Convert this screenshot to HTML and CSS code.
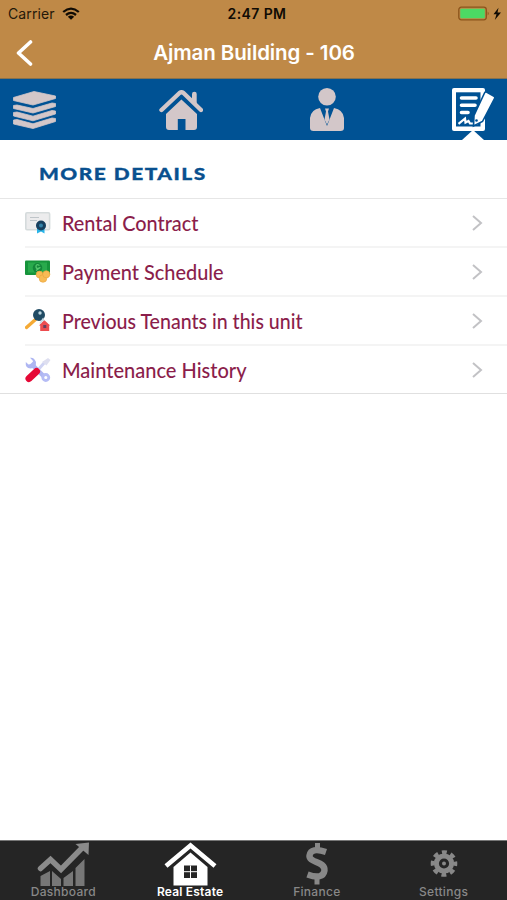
FILE: index.html
```html
<!DOCTYPE html>
<html lang="en">
<head>
<meta charset="utf-8">
<title>Ajman Building - 106</title>
<link rel="stylesheet" href="styles.css">
</head>
<body>
<div class="app">
  <header class="header">
    <div class="status">
      <div class="carrier"><span class="carrier-name">Carrier</span>
        <svg width="18" height="14" viewBox="0 0 18 14" fill="none" stroke="#100b04" stroke-width="2.3"><path d="M1.2 5Q9-1.7 16.8 5M4 8Q9 3.8 14 8"/><path d="M9 12.8 5.8 9.7Q9 7.2 12.2 9.7Z" fill="#100b04" stroke="none"/></svg>
      </div>
      <div class="clock"><span>2:47 PM</span></div>
      <div class="battery">
        <svg width="44" height="16" viewBox="0 0 44 16"><rect x=".8" y="1.2" width="27.5" height="12.6" rx="2.5" fill="none" stroke="#8b541c" stroke-width="1.3"/><rect x="2.3" y="2.7" width="24.5" height="9.6" rx="1" fill="#4cd964"/><path d="M29.7 5.500q2 2 0 4z" fill="#8b541c"/><path d="M40.500 1.800 35.500 8.200h3l-1.700 5.800 6.200-7.500h-3.500z" fill="#100b04"/></svg>
      </div>
    </div>
    <div class="navbar">
      <svg class="back" width="18" height="28" viewBox="0 0 18 28" fill="none" stroke="#fff" stroke-width="3.6" stroke-linecap="round" stroke-linejoin="round"><path d="M15.500 3 3.500 14l12 11"/></svg>
      <h1 class="title"><span>Ajman Building - 106</span></h1>
    </div>
  </header>

  <nav class="topnav">
    <svg width="44" height="61" viewBox="0 0 44 61" fill="#d3c7c9" stroke="#d3c7c9" stroke-width=".8" stroke-linejoin="round"><path d="M.500 18.500 21 12.500 42.500 17V19.500L20 26 .500 21.500Z"/><path d="M.500 26.500 4 26 20 29.500 39 24 42.500 24.500V27.500L20 34 .500 29.500Z"/><path d="M.500 33.500 4 33 20 37.200 39 31.500 42.500 32V35L20 41.800 .500 37Z"/><path d="M.500 41 4 40.500 20 44.800 39 39 42.500 39.500V42.500L20 49.500 .500 45Z"/></svg>
    <svg width="44" height="61" viewBox="0 0 44 61" fill="#d3c7c9"><path d="M33 24V15q0-2.200 2.400-2.200T37.700 15v11"/><path d="M2.500 31 20.500 14q2-1.500 4 0L42 31" fill="none" stroke="#d3c7c9" stroke-width="4.400" stroke-linecap="round" stroke-linejoin="round"/><path d="M22.400 20.500 38 35v13q0 3-3 3H26.500V40h-7.700V51H10q-3 0-3-3V35Z"/></svg>
    <svg width="44" height="61" viewBox="0 0 44 61"><circle cx="22" cy="17.800" r="8.800" fill="#d3c7c9"/><path d="M15 29 22 47 29 29q9 1.500 10 10v10q0 3-3.500 3h-27Q5 52 5 49V39q1-8.500 10-10Z" fill="#d3c7c9"/><path d="M20 29.500h4l-1 3 1.500 8-2.500 5-2.500-5 1.500-8Z" fill="#d3c7c9"/></svg>
    <svg width="44" height="61" viewBox="0 0 44 61"><path d="M3 9H32q2 0 2 2V50q0 2-2 2H3q-2 0-2-2V11Q1 9 3 9Z" fill="#fff"/><path d="M5 13.300H29.500V47.500H5Z" fill="#005294"/><path d="M10.500 19H25M10.500 26.300H24M10.500 33.500H17" stroke="#fff" stroke-width="3.600" stroke-linecap="round"/><path d="M7.500 44.800 14 39.500l.5 4 3-1.500 1.500 2.500H27" stroke="#fff" stroke-width="2.200" fill="none"/><path d="m35.500 13 7.500 4.200q1.300 1 .5 2.500L31.500 42.500l-9 4.500.5-10.500L33.500 14q.8-1.600 2-1Z" fill="#fff" stroke="#005294" stroke-width="1.600"/><circle cx="25.500" cy="41.500" r="1.300" fill="#005294"/><path d="M11 61 22 51 33 61Z" fill="#fff"/></svg>
  </nav>

  <main class="content">
    <div class="section"><h2><span>MORE DETAILS</span></h2></div>
    <ul class="list">
      <li class="row">
        <svg class="ico" viewBox="0 0 26 26"><rect x=".800" y="2.800" width="23.800" height="17" rx="1.200" fill="#ececed" stroke="#d5dbdc" stroke-width="1.600"/><path d="M5 7.500h9M5 10.500h7" stroke="#bfc5c9" stroke-width="1.200"/><path d="M12 17h7.500v6.500l-3.500-2-4 2Z" fill="#2ab4e8"/><circle cx="16" cy="15.500" r="5" fill="#173f5e"/><circle cx="16" cy="15.500" r="2" fill="#3382a8"/></svg>
        <span class="label"><span class="rental">Rental Contract</span></span><svg class="chev" viewBox="0 0 12 18"><path d="m2 2 8 7-8 7"/></svg></li>
      <li class="row">
        <svg class="ico" viewBox="0 0 26 26"><rect x="0" y="1.500" width="25" height="14.500" rx="1" fill="#16943b"/><path d="M3 3.500h19v10H3Z" fill="#29aa4c"/><circle cx="12.500" cy="8.800" r="4.800" fill="#14863a"/><path d="M14.500 6.500Q11 4.500 11 7.500t3 1.500-3 2.500" fill="none" stroke="#55c96d" stroke-width="1.300"/><g fill="#f8bb55" stroke="#e9a33a" stroke-width=".6"><circle cx="14.500" cy="15.500" r="3.400"/><circle cx="18" cy="19.500" r="3.800"/><circle cx="21.300" cy="15.300" r="3.600"/></g></svg>
        <span class="label"><span class="payment">Payment Schedule</span></span><svg class="chev" viewBox="0 0 12 18"><path d="m2 2 8 7-8 7"/></svg></li>
      <li class="row">
        <svg class="ico" viewBox="0 0 26 26"><path d="m1.500 19.500 9-8" stroke="#f5aa35" stroke-width="3.300" stroke-linecap="round"/><circle cx="14" cy="7" r="6" fill="#204b64"/><circle cx="15" cy="5" r="1.700" fill="#bad4df"/><path d="m14 17.500 5.300-5.500 5.700 5.500" fill="#ed4d50"/><path d="M15.200 16.500h9v6.500h-9Z" fill="#ed4d50"/><path d="M15 15.500 18 11l1 2" fill="none" stroke="#c5d7e2" stroke-width="1.500"/><path d="M18.300 17h3v3h-3Z" fill="#654060"/></svg>
        <span class="label"><span class="previous">Previous Tenants in this unit</span></span><svg class="chev" viewBox="0 0 12 18"><path d="m2 2 8 7-8 7"/></svg></li>
      <li class="row">
        <svg class="ico" viewBox="0 0 26 26"><path d="M6 6.500 20 20.500" stroke="#aeb6f2" stroke-width="4.500"/><path d="M5 .800 8 4 7 7 3.500 7.500.800 5Q0 11 5.500 11.500 11.500 11 11 5 9 0 5 .800Z" fill="#aeb6f2"/><circle cx="20.800" cy="20.500" r="3" fill="#fff" stroke="#b5bcf5" stroke-width="2.800"/><path d="m12 14 8-9" stroke="#cfd3f3" stroke-width="3"/><path d="m17 5 6-4 2.500 2-4 5.500Z" fill="#dedff0"/><path d="m4 21.500 7.500-7" stroke="#e50936" stroke-width="7" stroke-linecap="round"/></svg>
        <span class="label"><span class="maintenance">Maintenance History</span></span><svg class="chev" viewBox="0 0 12 18"><path d="m2 2 8 7-8 7"/></svg></li>
    </ul>
  </main>

  <footer class="tabbar">
    <div class="tab"><svg width="56" height="46" viewBox="0 0 56 46"><path d="M5.500 35l9.500-5v15H5.500ZM17 30l9 8v7h-9ZM28.500 37l9.500-7v15h-9.500ZM40.500 27l9-9v27h-9Z" fill="#777"/><path d="M5.500 27.500 15.500 18.500 26 28.500 47 7" fill="none" stroke="#8b8b8b" stroke-width="5.500" stroke-linecap="round"/><path d="M40.500 3 54 1.500 53.500 14Z" fill="#8b8b8b"/></svg><span class="dash">Dashboard</span></div>
    <div class="tab active"><svg width="56" height="46" viewBox="0 0 56 46"><path d="M4 25 28.500 4.500 53 25" fill="none" stroke="#fff" stroke-width="4.600"/><path d="M28.500 11.500 45.500 26v18.500h-34V26Z" fill="#fff"/><path d="M22 24.500h13v12.500H22Z" fill="#252525"/><path d="M28.500 24.500v12.500M22 30.700h13" stroke="#fff" stroke-width="1"/></svg><span class="real">Real Estate</span></div>
    <div class="tab"><svg width="56" height="46" viewBox="0 0 56 46"><path d="M37 11Q22 6 20.500 14.500C19.500 22 36.500 20 35.500 29.500Q34 39 18.500 33.500" fill="none" stroke="#888" stroke-width="6.400"/><path d="M26 2h5v7h-5ZM25.500 35h5v8.500h-5Z" fill="#888"/></svg><span class="fin">Finance</span></div>
    <div class="tab"><svg width="56" height="46" viewBox="0 0 56 46"><circle cx="28" cy="22.500" r="11.300" fill="none" stroke="#888" stroke-width="4" stroke-dasharray="4.900 3.975" stroke-dashoffset="2.450"/><circle cx="28" cy="22.500" r="7.600" fill="none" stroke="#888" stroke-width="5"/><circle cx="28" cy="22.500" r="2" fill="#888"/></svg><span class="set">Settings</span></div>
  </footer>
</div>
</body>
</html>
```
FILE: styles.css
```css
* { box-sizing: border-box; }
body { margin: 0; background: #fff; font-family: Inter, sans-serif; }
h1, h2, ul { margin: 0; padding: 0; }
svg { display: block; flex: none; }
.app { width: 507px; height: 900px; display: flex; flex-direction: column; overflow: hidden; }
.header { height: 79px; background: #bf8947; border-bottom: 1px solid #847150; }
.status { height: 27px; display: grid; grid-template-columns: 1fr 100px 1fr; align-items: center; color: #241809; font-size: 14px; padding: 0 5px 0 8px; }
.carrier { display: flex; align-items: center; gap: 7px; letter-spacing: .1px; }
.clock { text-align: center; font-weight: 600; color: #100b04; font-size: 14px; letter-spacing: .4px; white-space: nowrap; padding-left: 4px; }
.battery { display: flex; justify-content: flex-end; }
.navbar { height: 51px; display: grid; grid-template-columns: 60px 1fr 60px; align-items: center; }
.back { margin-left: 15px; }
.title { text-align: center; color: #fff; font-size: 20.5px; line-height: 26px; font-weight: 600; white-space: nowrap; letter-spacing: -.1px; padding-left: 1px; }
.topnav { height: 61px; background: #005294; display: flex; justify-content: space-between; padding: 0 12px 0 13px; }
.content { flex: 1; }
.section { height: 59px; border-bottom: 1px solid #e6e6e6; padding: 21px 0 0 39px; }
.section h2 { font-family: Lato, sans-serif; color: #09508f; font-size: 17px; line-height: 25px; font-weight: 900; -webkit-text-stroke: .3px #09508f; }
.section h2 span { display: inline-block; transform: scaleX(1.23); transform-origin: left; letter-spacing: 1.2px; white-space: nowrap; }
.list { list-style: none; border-bottom: 1px solid #e0e0e0; }
.row { height: 49px; margin-left: 25px; padding-right: 24px; display: flex; align-items: center; border-bottom: 2px solid #f4f4f4; }
.row:last-child { height: 47px; border-bottom: 0; }
.ico { width: 26px; height: 26px; }
.label { flex: 1; margin-left: 11px; font-family: Lato, sans-serif; font-weight: 500; font-size: 21px; line-height: 26px; color: #8b1e4b; white-space: nowrap; }
.label span { display: inline-block; transform-origin: left; }
.rental { transform: scaleX(.945); }
.payment { transform: scaleX(.948); }
.previous { transform: scaleX(.931); }
.maintenance { transform: scaleX(.953); }
.chev { width: 12px; height: 18px; fill: none; stroke: #c2c2c5; stroke-width: 2; }
.tabbar { height: 60px; background: #252525; border-top: 1px solid #777; display: grid; grid-template-columns: repeat(4, 1fr); }
.tab { display: flex; flex-direction: column; align-items: center; color: #888; font-size: 12px; line-height: 12px; font-weight: 500; letter-spacing: .3px; height: 59px; }
.tab span { margin-top: -1px; white-space: nowrap; }
.tab.active { color: #fff; font-weight: 600; letter-spacing: .2px; }
```
